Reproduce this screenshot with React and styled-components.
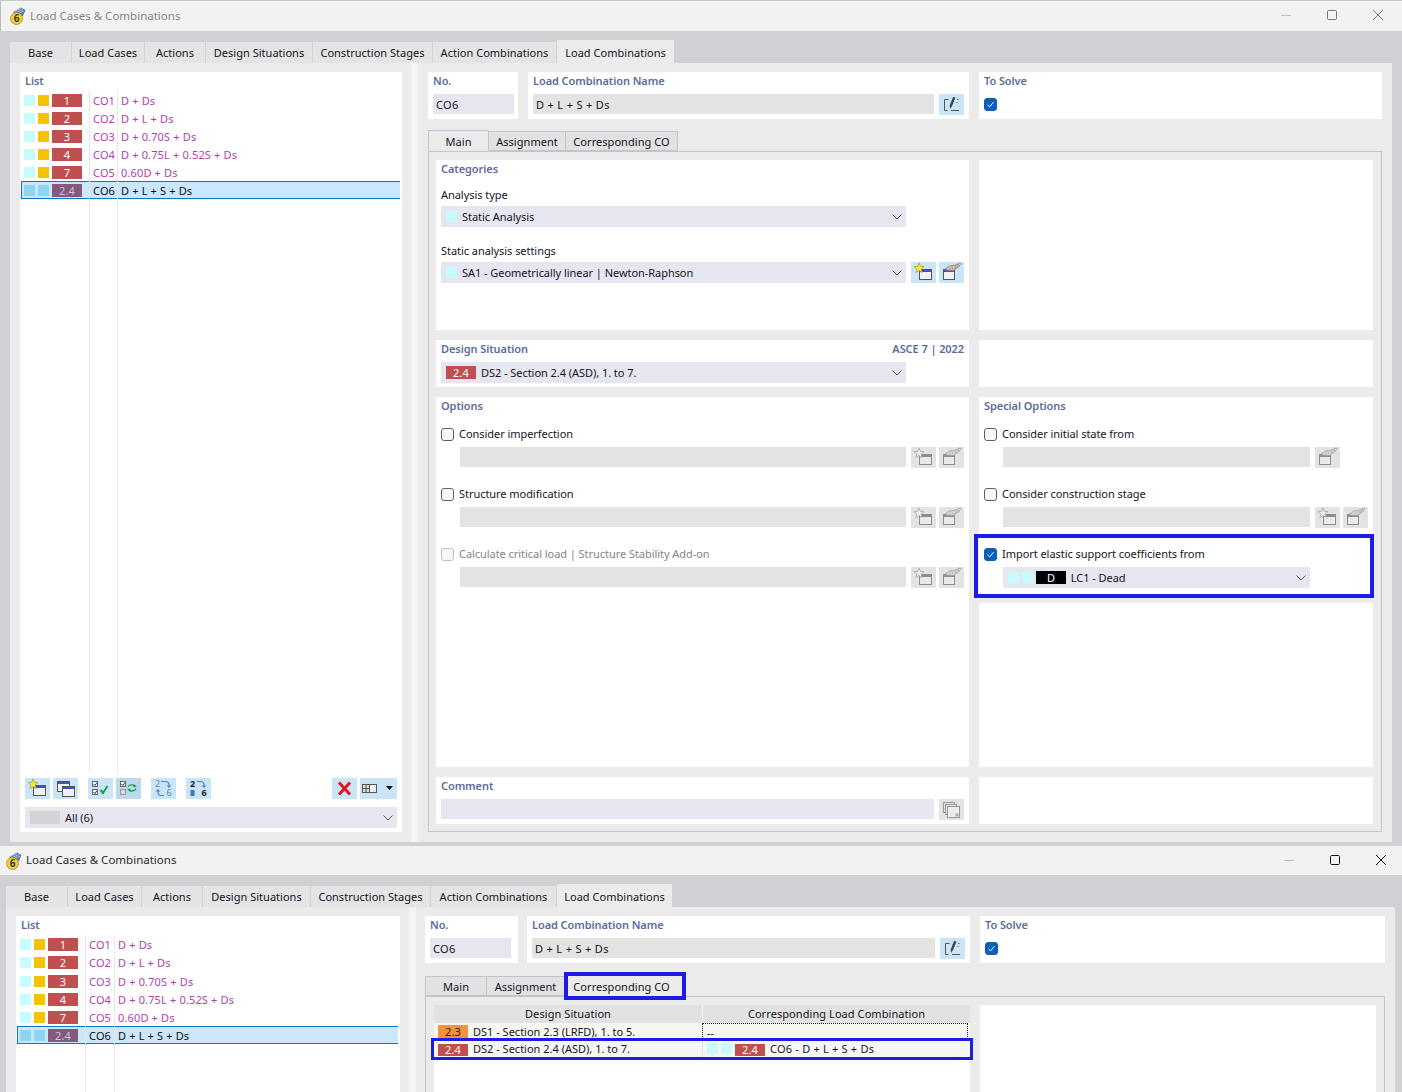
import React from "react";
import styled, { createGlobalStyle } from "styled-components";

const Global = createGlobalStyle`
  html, body { margin: 0; padding: 0; width: 1402px; height: 1092px; overflow: hidden; background: #d1d0d4; }
  #root { width: 1402px; height: 1092px; overflow: hidden; }
  * { box-sizing: border-box; }
  body { font-family: "Noto Sans", "Open Sans", sans-serif; font-size: 11px; color: #14141e; }
`;

const Page = styled.div`display: flex; flex-direction: column; width: 1402px;`;
const WindowFrame = styled.section`display: flex; flex-direction: column; background: #d1d0d4; flex: none;`;
const TitleBar = styled.header`
  height: ${p => p.$h}px; display: flex; align-items: center; background: #f2f2f2;
  padding-left: ${p => p.$left}px; color: ${p => (p.$active ? "#2a2a2a" : "#858585")};
  font-size: 11.5px; gap: 4px;
  ${p => (p.$active ? "" : "border-top: 1px solid #c8c8c8; border-left: 1px solid #bbb;")}
`;
const TitleText = styled.span`margin-bottom: 2px; white-space: nowrap;`;
const Controls = styled.div`margin-left: auto; display: flex; align-items: center; height: 100%; padding: 0 ${p => p.$right}px 2px 0;`;
const Control = styled.svg`width: ${p => p.$w}px; height: 12px; flex: none;`;
const TabStrip = styled.nav`display: flex; align-items: flex-end; gap: 1px; height: 32px; padding-left: ${p => p.$left}px;`;
const TopTab = styled.div`
  width: ${p => p.$w}px; height: ${p => (p.$on ? 23 : 21)}px; display: flex; align-items: center; justify-content: center;
  padding-top: ${p => (p.$on ? 2 : 0)}px;
  background: ${p => (p.$on ? "#ebebeb" : "#e4e4e4")}; white-space: nowrap; letter-spacing: .02px;
`;
const Body = styled.div`
  height: ${p => p.$h}px; margin: 0 ${p => p.$right}px ${p => (p.$open ? 0 : 4)}px ${p => p.$left}px; background: #ebebeb;
  padding: 9px 10px ${p => (p.$open ? 0 : 10)}px 10px; display: flex; flex: none;
`;
const Splitter = styled.div`
  width: 7px; flex: none; background: #f4f4f4; margin: -9px ${p => p.$after}px ${p => (p.$open ? 0 : -10)}px 9px;
`;
const ListPanel = styled.aside`width: ${p => p.$w}px; background: #fff; display: flex; flex-direction: column; flex: none;`;
const PanelTitle = styled.div`
  height: 18px; padding: 0 0 2px 0; display: flex; align-items: center; justify-content: space-between;
  color: #5c6c98; font-weight: 600; letter-spacing: -.08px; flex: none; white-space: nowrap;
`;
const ListTitle = styled(PanelTitle)`height: ${p => p.$h}px; padding-left: 5px;`;
const ListBody = styled.div`
  flex: 1; margin: 0 2px 0 1px; min-height: 0;
  background-image: linear-gradient(#e8e8e8, #e8e8e8), linear-gradient(#e8e8e8, #e8e8e8);
  background-size: 1px 100%, 1px 100%; background-repeat: no-repeat;
  background-position: 68px 0, ${p => p.$second}px 0;
`;
const ListRow = styled.div`
  height: 18px; margin-top: ${p => p.$mt}px; display: flex; align-items: center; color: ${p => (p.$sel ? "#111" : "#b03fae")};
  background: ${p => (p.$sel ? "#cce6fb" : "transparent")};
  box-shadow: ${p => (p.$sel ? "inset 1px 0 #0a78c8, inset 0 1px #0a78c8, inset 0 -1px #0a78c8" : "none")};
  white-space: nowrap; letter-spacing: .15px;
`;
const RowTags = styled.div`width: 68px; padding-left: 3px; display: flex; align-items: center; gap: 3px; flex: none;`;
const Swatch = styled.span`width: 11px; height: 11px; background: ${p => p.$c}; flex: none; display: block;`;
const Badge = styled.span`
  width: 30px; height: ${p => p.$h || 13}px; background: ${p => p.$c}; color: ${p => p.$t || "#fff"};
  margin-top: ${p => p.$mt || 0}px;
  display: flex; align-items: center; justify-content: center; flex: none; letter-spacing: .1px;
`;
const CoCell = styled.div`width: ${p => p.$w}px; padding-left: 3px; border-left: 1px solid #e8e8e8; flex: none; height: 100%; display: flex; align-items: center;`;
const FormulaCell = styled(CoCell)`width: auto; flex: 1;`;
const Toolbar = styled.div`display: flex; align-items: center; padding: 0 5px; margin-top: 6px; height: 21px; flex: none;`;
const ToolGroup = styled.div`display: flex; gap: 3px; margin-right: 10px;`;
const ToolButton = styled.button`
  width: ${p => p.$w || 25}px; height: 21px; padding: 0; border: 0; flex: none; display: flex; align-items: center; justify-content: center;
  background: ${p => (p.$off ? "#e3e3e3" : p.$dark ? "#bcd9ee" : "#cbe5f8")};
`;
const Spacer = styled.div`flex: 1;`;
const Combo = styled.div`
  height: 21px; background: #e6e6f0; display: flex; align-items: center; padding: 0 3px 0 5px; gap: 5px;
  ${p => (p.$w ? `width: ${p.$w}px;` : "flex: 1;")} min-width: 0; white-space: nowrap; letter-spacing: -.05px; flex-shrink: 0;
`;
const ListCombo = styled(Combo)`margin: 8px 5px 4px; flex: none;`;
const GraySwatch = styled.span`width: 30px; height: 13px; background: #d4d4d4; flex: none;`;
const Chevron = styled.svg`width: 10px; height: 6px; margin-left: auto; margin-right: 1px; flex: none;`;
const Right = styled.main`flex: 1; display: flex; flex-direction: column; min-width: 0;`;
const HeadRow = styled.div`display: flex; flex: none; height: 47px;`;
const HeadPanel = styled.div`width: ${p => p.$w}px; margin-right: ${p => p.$mr || 0}px; background: #fff; flex: none;`;
const HeadTitle = styled(PanelTitle)`height: 18px; padding-left: 5px;`;
const HeadField = styled.div`display: flex; gap: 5px; padding: 4px 5px 0 5px;`;
const Field = styled.div`
  height: 20px; ${p => (p.$w ? `width: ${p.$w}px;` : "flex: 1;")} background: ${p => (p.$edit ? "#e6e6f0" : "#e3e3e3")};
  display: flex; align-items: center; padding-left: 3px; flex-shrink: 0; letter-spacing: .33px; min-width: 0; white-space: nowrap;
`;
const ToSolveBox = styled.div`margin-top: 4px; display: flex;`;
const SubTabs = styled.div`display: flex; align-items: flex-end; height: 21px; margin-top: ${p => p.$mt}px; flex: none; position: relative; z-index: 1;`;
const SubTab = styled.div`
  width: ${p => p.$w}px; height: ${p => (p.$on ? 21 : 20)}px; display: flex; align-items: center; justify-content: center;
  padding-top: ${p => (p.$on ? 1 : 0)}px;
  background: ${p => (p.$on ? "#ebebeb" : "#e2e2e2")}; border: 1px solid #c4c4d0; border-left-width: ${p => (p.$first ? 1 : 0)}px;
  border-bottom: ${p => (p.$on ? "1px solid #ebebeb" : "1px solid #c4c4d0")}; letter-spacing: .05px; white-space: nowrap; flex: none;
  ${p => (p.$mark ? "outline: 4px solid #1c1ce6; border: 0; height: 20px; margin: 0 3px; background: #ebebeb; padding: 0 7px 0 0;" : "")}
`;
const TabBox = styled.div`
  flex: 1; min-height: 0; border: 1px solid #c4c4d0; padding: ${p => p.$pad}; display: grid;
  ${p => (p.$open ? "border-bottom: 0;" : "")}
  grid-template-columns: ${p => p.$cols}; column-gap: 10px; row-gap: 10px; grid-template-rows: ${p => p.$rows};
`;
const Panel = styled.div`background: #fff; padding: 0 5px; min-width: 0; display: flex; flex-direction: column;`;
const Stack = styled.div`display: flex; flex-direction: column; gap: 6px; min-height: 0;`;
const Grow = styled(Panel)`flex: 1;`;
const Label = styled.div`height: 18px; line-height: 18px; margin-top: ${p => p.$mt || 0}px; letter-spacing: -.05px; white-space: nowrap; flex: none;`;
const FieldRow = styled.div`display: flex; margin-top: ${p => p.$mt ?? 2}px; padding-left: ${p => p.$left || 0}px; flex: none; height: 21px;`;
const RowButtons = styled.div`display: flex; gap: 3px; margin-left: 5px; flex: none;`;
const CheckRow = styled.label`
  display: flex; align-items: center; gap: 5px; height: 18px; margin-top: ${p => p.$mt || 0}px; flex: none; white-space: nowrap;
  letter-spacing: -.05px; color: ${p => (p.$off ? "#858585" : "inherit")};
`;
const CheckText = styled.span`margin-bottom: 2px;`;
const Box = styled.span`
  width: 13px; height: 13px; border-radius: 3px; flex: none; display: flex; align-items: center; justify-content: center;
  background: ${p => (p.$on ? "#0a5fbd" : "#f8f8f8")}; border: 1px solid ${p => (p.$on ? "#0a5fbd" : p.$off ? "#c0c0c0" : "#606060")};
`;
const Marked = styled.div`
  outline: 4px solid #1c1ce6; margin: 10px -2px 3px -6px; padding: 7px 0 6px 6px; display: flex; flex-direction: column; flex: none;
`;
const Grid = styled.div`flex: 1; display: flex; flex-direction: column; min-width: 0;`;
const Gridline = styled.div`
  display: grid; grid-template-columns: 268px 1fr; flex: none; height: ${p => p.$h}px;
  background: ${p => p.$bg}; ${p => (p.$mark ? "outline: 3px solid #1c1ce6; position: relative;" : "")}
`;
const HeadCell = styled.div`display: flex; align-items: center; justify-content: center; letter-spacing: .07px; padding-bottom: 2px; border-left: ${p => (p.$div ? "1px solid #f4f4f4" : "0")};`;
const DataCell = styled.div`
  display: flex; align-items: center; gap: 5px; padding: 0 0 ${p => p.$low}px ${p => p.$left}px; letter-spacing: ${p => p.$ls ?? 0}px; white-space: nowrap;
  border-left: ${p => (p.$div ? "1px solid #e3e3e3" : "0")};
  outline: ${p => (p.$focus ? "1px dotted #222" : "0")}; outline-offset: -1px; margin-right: ${p => (p.$focus ? 2 : 0)}px;
`;
const MiniSwatches = styled.div`display: flex; gap: 3px; margin-right: -3px; align-items: center;`;
const TablePanel = styled.div`background: #fff; display: flex; min-height: 0;`;
const SidePanel = styled.div`background: #fff;`;

const Cy = "#c8fbfd";

const AppIcon = () => (
  <svg width="17" height="18" viewBox="0 0 17 18" style={{ flex: "none" }}>
    <path d="M4 5 L12 0.5 L16.5 3 L14 9 L8 8 Z" fill="#5b78a8" />
    <path d="M5 4.5 L12 1.5 M6 6 L14 2.5 M8 7 L15 4" stroke="#c8d4e6" strokeWidth=".8" />
    <circle cx="7.5" cy="11.5" r="6" fill="#f3cf2b" stroke="#8a7420" strokeWidth=".6" />
    <text x="7.5" y="15" textAnchor="middle" fontSize="10" fontWeight="700" fill="#3a3a3a" fontFamily="Noto Sans">6</text>
  </svg>
);
const NewIcon = ({ dim }) => (
  <svg width="25" height="21" viewBox="0 0 25 21">
    <rect x="8.5" y="7.5" width="12" height="10" fill={dim ? "#eaeaea" : "#f2f2f2"} stroke={dim ? "#8c8c8c" : "#555"} />
    <rect x="9" y="8" width="11" height="2" fill={dim ? "#8c8c8c" : "#3c50d0"} />
    <path d="M8 .8 L9.4 4.4 L13 4.6 L10.2 7 L11.1 10.6 L8 8.6 L4.9 10.6 L5.8 7 L3 4.6 L6.6 4.4 Z" fill={dim ? "#ececec" : "#f8ee2e"} stroke={dim ? "#a0a0a0" : "#a89a20"} strokeWidth=".7" />
  </svg>
);
const LibIcon = ({ dim }) => (
  <svg width="25" height="21" viewBox="0 0 25 21">
    <rect x="4.5" y="7.5" width="11" height="10" fill={dim ? "#eaeaea" : "#f2f2f2"} stroke={dim ? "#8c8c8c" : "#555"} />
    <rect x="5" y="8" width="10" height="2" fill={dim ? "#8c8c8c" : "#3c50d0"} />
    <path d="M6 7 L10 4 L15 3.2 L19 2 L21 4 L18 6 L15 8.8 L8 8.5 Z" fill={dim ? "#c4c4c4" : "#bba79c"} stroke={dim ? "#979797" : "#85746b"} strokeWidth=".5" />
    <path d="M9 5.5 L10 7.5 M11.5 4.6 L12.5 7.3 M14.2 4 L15 6.5" stroke="#f0ece8" strokeWidth=".7" />
    <path d="M19 1.5 L21.5 1 L22 3" stroke={dim ? "#aaa" : "#6f9bd8"} strokeWidth="1" fill="none" />
  </svg>
);
const EditIcon = () => (
  <svg width="25" height="21" viewBox="0 0 25 21" fill="none">
    <path d="M9.5 5.5 H5.5 V16.5 H8.5" stroke="#555" />
    <path d="M12 16.5 H20" stroke="#555" />
    <path d="M16.5 3.5 L13.2 11.8 L11 15 L10.8 11.2 L14 3 Z" fill="#444" />
    <path d="M18 5.5 H19.5 M17.5 8.5 H18.5" stroke="#666" />
  </svg>
);
const CopyIcon = ({ c = "#555" }) => (
  <svg width="25" height="21" viewBox="0 0 25 21">
    <rect x="4.5" y="3.5" width="12" height="10" fill="#f2f2f2" stroke={c} />
    <rect x="5" y="4" width="11" height="2" fill="#3c50d0" />
    <rect x="9.5" y="8.5" width="12" height="10" fill="#f2f2f2" stroke={c} />
    <rect x="10" y="9" width="11" height="2" fill="#3c50d0" />
  </svg>
);
const CommentCopyIcon = () => (
  <svg width="25" height="21" viewBox="0 0 25 21" fill="none" stroke="#999">
    <rect x="4.5" y="3.5" width="11" height="10" fill="#e3e3e3" />
    <rect x="6.5" y="5.5" width="11" height="10" fill="#e3e3e3" />
    <rect x="8.5" y="7.5" width="12" height="11" fill="#ececec" />
    <rect x="16.5" y="14.5" width="3" height="3" fill="#aaa" stroke="none" />
  </svg>
);
const CheckListIcon = () => (
  <svg width="25" height="21" viewBox="0 0 25 21" fill="none">
    <rect x="4.5" y="3.5" width="5" height="5" fill="#fff" stroke="#666" />
    <rect x="4.5" y="11.5" width="5" height="5" fill="#fff" stroke="#666" />
    <path d="M5.5 6 L7 7.5 L9 4.5 M5.5 14 L7 15.5 L9 12.5" stroke="#222" strokeWidth=".9" />
    <path d="M12.5 12 L15 15 L19.5 8" stroke="#17a34a" strokeWidth="2" />
  </svg>
);
const SwapListIcon = () => (
  <svg width="25" height="21" viewBox="0 0 25 21" fill="none">
    <rect x="4.5" y="3.5" width="5" height="5" fill="#fff" stroke="#666" />
    <rect x="4.5" y="11.5" width="5" height="5" fill="#dcdcdc" stroke="#999" />
    <path d="M5.5 6 L7 7.5 L9 4.5" stroke="#222" strokeWidth=".9" />
    <path d="M12 8.5 C14 6.5 16.5 6.5 19 8 M20 11 C17.5 13.5 15 13.5 13 12" stroke="#17a34a" strokeWidth="1.4" />
    <path d="M17.5 6 L21 8.5 L17.5 9.5 Z M14.5 14 L11 11.5 L14.5 10.5 Z" fill="#17a34a" />
  </svg>
);
const RenumberIcon = () => (
  <svg width="25" height="21" viewBox="0 0 25 21" fill="none">
    <text x="4" y="9" fontSize="9" fill="#4d86c6" fontFamily="Noto Sans">2</text>
    <text x="15.5" y="18" fontSize="9" fill="#4d86c6" fontFamily="Noto Sans">6</text>
    <path d="M10 3.5 H14 Q18 3.5 18 7 V8" stroke="#4d86c6" strokeWidth="1.2" />
    <path d="M15.5 7.5 H20.5 L18 10 Z" fill="#4d86c6" />
    <path d="M13 17.5 H10 Q7 17.5 7 14 V13" stroke="#4d86c6" strokeWidth="1.2" />
    <path d="M4.5 13.5 H9.5 L7 11 Z" fill="#4d86c6" />
  </svg>
);
const SortIcon = () => (
  <svg width="25" height="21" viewBox="0 0 25 21" fill="none">
    <text x="4" y="9" fontSize="9" fontWeight="700" fill="#1a1a1a" fontFamily="Noto Sans">2</text>
    <text x="15.5" y="18" fontSize="9" fontWeight="700" fill="#1a1a1a" fontFamily="Noto Sans">6</text>
    <path d="M10.5 3.5 H14 Q18 3.5 18 7 V8" stroke="#4d86c6" strokeWidth="1.2" />
    <path d="M15.5 7.5 H20.5 L18 10 Z" fill="#4d86c6" />
    <rect x="4.5" y="12" width="4" height="6" fill="#3f79b8" />
  </svg>
);
const DeleteIcon = () => (
  <svg width="25" height="21" viewBox="0 0 25 21" fill="none">
    <path d="M7 4.5 L18 16.5 M18 4.5 L7 16.5" stroke="#e8141c" strokeWidth="3" />
  </svg>
);
const ViewIcon = () => (
  <svg width="37" height="21" viewBox="0 0 37 21" fill="none">
    <rect x="2.5" y="6.5" width="7" height="8" fill="#ddd" stroke="#555" />
    <path d="M6 6.5 V14.5 M2.5 10.5 H9.5" stroke="#555" />
    <rect x="9.5" y="6.5" width="7" height="8" fill="#f2f2f2" stroke="#555" />
    <path d="M26 8 H33 L29.5 12 Z" fill="#111" />
  </svg>
);
const Tick = () => (
  <svg width="9" height="9" viewBox="0 0 9 9" fill="none"><path d="M1.5 4.8 L3.6 6.8 L7.5 2.2" stroke="#fff" strokeWidth="1" /></svg>
);
const Down = () => (
  <Chevron viewBox="0 0 10 6" fill="none"><path d="M.5 .5 L5 5 L9.5 .5" stroke="#555" /></Chevron>
);

const Check = ({ on, off, mt, children }) => (
  <CheckRow $off={off} $mt={mt}><Box $on={on} $off={off}>{on && <Tick />}</Box><CheckText>{children}</CheckText></CheckRow>
);

const rows = [
  ["1", "CO1", "D + Ds"], ["2", "CO2", "D + L + Ds"], ["3", "CO3", "D + 0.70S + Ds"],
  ["4", "CO4", "D + 0.75L + 0.52S + Ds"], ["7", "CO5", "0.60D + Ds"], ["2.4", "CO6", "D + L + S + Ds"],
];

const List = ({ w, titleH, second, bump, tools }) => (
  <ListPanel $w={w}>
    <ListTitle $h={titleH}>List</ListTitle>
    <ListBody $second={second}>
      {rows.map(([n, co, f], i) => {
        const sel = i === 5;
        return (
          <ListRow key={co} $sel={sel} $mt={i === bump ? 1 : 0}>
            <RowTags>
              <Swatch $c={sel ? "#8dd5f3" : Cy} />
              <Swatch $c={sel ? "#8dd5f3" : "#f5c400"} />
              <Badge $c={sel ? "#86587a" : "#c05050"} $t={sel ? "#c8c4dc" : "#fff"}>{n}</Badge>
            </RowTags>
            <CoCell $w={second - 68}>{co}</CoCell>
            <FormulaCell $w={0}>{f}</FormulaCell>
          </ListRow>
        );
      })}
    </ListBody>
    {tools && (
      <>
        <Toolbar>
          <ToolGroup><ToolButton><NewIcon /></ToolButton><ToolButton><CopyIcon /></ToolButton></ToolGroup>
          <ToolGroup><ToolButton><CheckListIcon /></ToolButton><ToolButton $dark><SwapListIcon /></ToolButton></ToolGroup>
          <ToolGroup><ToolButton><RenumberIcon /></ToolButton></ToolGroup>
          <ToolGroup><ToolButton><SortIcon /></ToolButton></ToolGroup>
          <Spacer />
          <RowButtons>
            <ToolButton><DeleteIcon /></ToolButton>
            <ToolButton $w={37}><ViewIcon /></ToolButton>
          </RowButtons>
        </Toolbar>
        <ListCombo><GraySwatch />All (6)<Down /></ListCombo>
      </>
    )}
  </ListPanel>
);

const Off = ({ children }) => <ToolButton $off>{children}</ToolButton>;

const MainTab = () => (
  <TabBox $pad="8px 8px 7px 7px" $cols="533px 394px" $rows="170px 47px 370px 47px">
    <Panel>
      <PanelTitle>Categories</PanelTitle>
      <Label $mt={8}>Analysis type</Label>
      <FieldRow><Combo $w={465}><Swatch $c={Cy} />Static Analysis<Down /></Combo></FieldRow>
      <Label $mt={15}>Static analysis settings</Label>
      <FieldRow>
        <Combo $w={465}><Swatch $c={Cy} />SA1 - Geometrically linear | Newton-Raphson<Down /></Combo>
        <RowButtons><ToolButton><NewIcon /></ToolButton><ToolButton><LibIcon /></ToolButton></RowButtons>
      </FieldRow>
    </Panel>
    <SidePanel />
    <Panel>
      <PanelTitle>Design Situation<span>ASCE 7 | 2022</span></PanelTitle>
      <FieldRow $mt={4}>
        <Combo $w={465}><Badge $c="#c05050">2.4</Badge>DS2 - Section 2.4 (ASD), 1. to 7.<Down /></Combo>
      </FieldRow>
    </Panel>
    <SidePanel />
    <Panel>
      <PanelTitle>Options</PanelTitle>
      <Check mt={10}>Consider imperfection</Check>
      <FieldRow $mt={4} $left={19}><Field />
        <RowButtons><Off><NewIcon dim /></Off><Off><LibIcon dim /></Off></RowButtons>
      </FieldRow>
      <Check mt={17}>Structure modification</Check>
      <FieldRow $mt={4} $left={19}><Field />
        <RowButtons><Off><NewIcon dim /></Off><Off><LibIcon dim /></Off></RowButtons>
      </FieldRow>
      <Check mt={17} off>Calculate critical load | Structure Stability Add-on</Check>
      <FieldRow $mt={4} $left={19}><Field />
        <RowButtons><Off><NewIcon dim /></Off><Off><LibIcon dim /></Off></RowButtons>
      </FieldRow>
    </Panel>
    <Stack>
      <Panel>
        <PanelTitle>Special Options</PanelTitle>
        <Check mt={10}>Consider initial state from</Check>
        <FieldRow $mt={4} $left={19}><Field $w={307} />
          <RowButtons><Off><LibIcon dim /></Off></RowButtons>
        </FieldRow>
        <Check mt={17}>Consider construction stage</Check>
        <FieldRow $mt={4} $left={19}><Field $w={307} />
          <RowButtons><Off><NewIcon dim /></Off><Off><LibIcon dim /></Off></RowButtons>
        </FieldRow>
        <Marked>
          <Check on>Import elastic support coefficients from</Check>
          <FieldRow $mt={4} $left={19}>
            <Combo $w={307}>
              <MiniSwatches><Swatch $c={Cy} /><Swatch $c={Cy} /><Badge $c="#000">D</Badge></MiniSwatches>
              &nbsp;LC1 - Dead<Down />
            </Combo>
          </FieldRow>
        </Marked>
      </Panel>
      <Grow />
    </Stack>
    <Panel>
      <PanelTitle>Comment</PanelTitle>
      <FieldRow $mt={4}><Field $edit /><RowButtons><ToolButton $off><CommentCopyIcon /></ToolButton></RowButtons></FieldRow>
    </Panel>
    <SidePanel />
  </TabBox>
);

const CorrespondingTab = () => (
  <TabBox $open $pad="8px 8px 0 8px" $cols="536px 396px" $rows="1fr">
    <TablePanel>
      <Grid>
        <Gridline $h={18} $bg="#e2e2e2">
          <HeadCell>Design Situation</HeadCell>
          <HeadCell $div>Corresponding Load Combination</HeadCell>
        </Gridline>
        <Gridline $h={18} $bg="#f7f7f2">
          <DataCell $left={4} $low={2}><Badge $c="#f5923e" $t="#222">2.3</Badge>DS1 - Section 2.3 (LRFD), 1. to 5.</DataCell>
          <DataCell $left={4} $low={0} $focus $div>--</DataCell>
        </Gridline>
        <Gridline $h={16} $bg="#f7f7f2" $mark>
          <DataCell $left={4} $low={4}><Badge $c="#c05050" $h={12} $mt={2}>2.4</Badge>DS2 - Section 2.4 (ASD), 1. to 7.</DataCell>
          <DataCell $left={4} $low={4} $ls={.2} $div>
            <MiniSwatches><Swatch $c={Cy} /><Swatch $c={Cy} /><Badge $c="#c05050" $h={12} $mt={2}>2.4</Badge></MiniSwatches>
            &nbsp;CO6 - D + L + S + Ds
          </DataCell>
        </Gridline>
      </Grid>
    </TablePanel>
    <SidePanel />
  </TabBox>
);

const Win = ({ cfg, children }) => (
  <WindowFrame>
    <TitleBar $h={cfg.titleH} $left={cfg.titleLeft} $active={cfg.active}>
      <AppIcon /><TitleText>Load Cases &amp; Combinations</TitleText>
      <Controls $right={cfg.ctrlRight}>
        <Control $w={46} viewBox="0 0 46 12" fill="none" stroke="#c0c0c0"><path d="M18 6.5 H28" /></Control>
        <Control $w={46} viewBox="0 0 46 12" fill="none" stroke={cfg.active ? "#111" : "#777"}><rect x="18.5" y="1.5" width="9" height="9" rx="1" /></Control>
        <Control $w={cfg.closeW} viewBox={`0 0 ${cfg.closeW} 12`} fill="none" stroke={cfg.active ? "#111" : "#777"}><path d="M18 1 L28 11 M28 1 L18 11" /></Control>
      </Controls>
    </TitleBar>
    <TabStrip $left={cfg.left}>
      {["Base", "Load Cases", "Actions", "Design Situations", "Construction Stages", "Action Combinations", "Load Combinations"].map((t, i) => (
        <TopTab key={t} $w={cfg.tabs[i]} $on={i === 6}>{t}</TopTab>
      ))}
    </TabStrip>
    <Body $h={cfg.bodyH} $open={cfg.open} $left={cfg.left} $right={cfg.right}>
      <List w={cfg.listW} titleH={cfg.listTitle} second={cfg.second} bump={cfg.bump} tools={!cfg.open} />
      <Splitter $after={cfg.splitAfter} $open={cfg.open} />
      <Right>
        <HeadRow>
          <HeadPanel $w={cfg.head[0]} $mr={cfg.headGap[0]}>
            <HeadTitle>No.</HeadTitle>
            <HeadField><Field $w={81} $edit>CO6</Field></HeadField>
          </HeadPanel>
          <HeadPanel $w={cfg.head[1]} $mr={cfg.headGap[1]}>
            <HeadTitle>Load Combination Name</HeadTitle>
            <HeadField><Field>D + L + S + Ds</Field><ToolButton><EditIcon /></ToolButton></HeadField>
          </HeadPanel>
          <HeadPanel $w={cfg.head[2]}>
            <HeadTitle>To Solve</HeadTitle>
            <HeadField><ToSolveBox><Box $on><Tick /></Box></ToSolveBox></HeadField>
          </HeadPanel>
        </HeadRow>
        <SubTabs $mt={cfg.subGap}>
          {cfg.sub.map(([t, w, on, mark], i) => (
            <SubTab key={t} $w={w} $on={on} $mark={mark} $first={i === 0}>{t}</SubTab>
          ))}
        </SubTabs>
        {children}
      </Right>
    </Body>
  </WindowFrame>
);

const first = {
  titleH: 31, titleLeft: 8, active: false, left: 10, right: 10, splitAfter: 10, listW: 382, listTitle: 19, second: 96, bump: -1,
  bodyH: 779, closeW: 46, ctrlRight: 1,
  tabs: [61, 72, 60, 106, 119, 123, 117], head: [90, 441, 403], headGap: [10, 10], subGap: 11,
  sub: [["Main", 61, true], ["Assignment", 77], ["Corresponding CO", 112]],
};
const second = {
  titleH: 29, titleLeft: 5, active: true, left: 6, right: 7, splitAfter: 9, listW: 384, listTitle: 19, second: 97, bump: 2,
  bodyH: 185, open: true, closeW: 44, ctrlRight: 0,
  tabs: [61, 73, 60, 107, 119, 125, 115], head: [93, 443, 405], headGap: [9, 10], subGap: 12,
  sub: [["Main", 62], ["Assignment", 78], ["Corresponding CO", 114, true, true]],
};

export default function App() {
  return (
    <>
      <Global />
      <Page>
        <Win cfg={first}><MainTab /></Win>
        <Win cfg={second}><CorrespondingTab /></Win>
      </Page>
    </>
  );
}
